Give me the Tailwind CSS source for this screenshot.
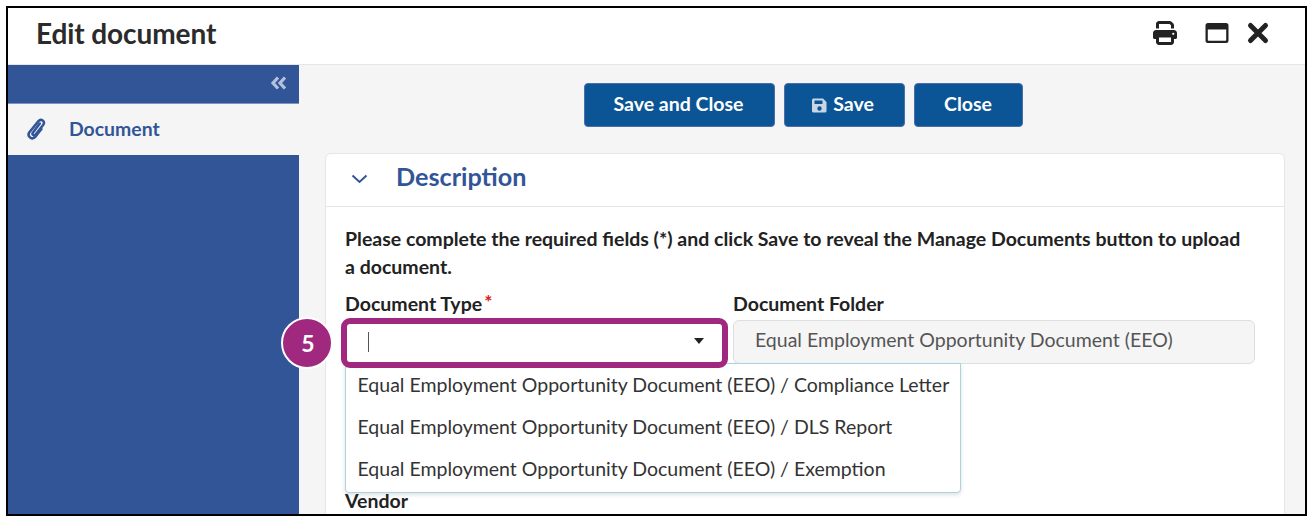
<!DOCTYPE html>
<html>
<head>
<meta charset="utf-8">
<script src="https://cdn.jsdelivr.net/npm/@tailwindcss/browser@4"></script>
</head>
<body class="bg-white">
<div class="w-[1313px] h-[522px] pt-[6px] pl-[6px] pr-[6px] pb-[6px] bg-white font-['Lato',sans-serif]">
  <div class="w-[1301px] h-[510px] border-2 border-black flex flex-col overflow-hidden bg-white">
    <header class="h-[57px] shrink-0 flex items-center justify-between border-b border-[#e6e6e6] pl-[28px] pr-[35px]">
      <h1 class="text-[28px] leading-[34px] font-bold text-[#2b2b2b] tracking-[-0.1px] -mt-[6px]">Edit document</h1>
      <div class="flex items-center gap-[17px] -mt-[7px]">
        <svg class="w-[24px] h-[24px] mr-[10px]" viewBox="0 0 512 512" fill="#222"><path d="M128 0C92.700 0 64 28.700 64 64v96h64V64h226.700L384 93.300V160h64V93.300c0-17-6.700-33.300-18.700-45.300L400 18.700C388 6.700 371.700 0 354.700 0H128zM384 352v96H128v-96h256zm64 32h32c17.700 0 32-14.300 32-32V256c0-35.300-28.700-64-64-64H64c-35.300 0-64 28.700-64 64v96c0 17.700 14.300 32 32 32h32v64c0 35.300 28.700 64 64 64h256c35.300 0 64-28.700 64-64v-64zm-16-136a24 24 0 1 1 0 48 24 24 0 1 1 0-48z"/></svg>
        <svg class="w-[24px] h-[24px] ml-[1px]" viewBox="0 0 24 24" fill="#222"><path fill-rule="evenodd" d="M3 2h18a2.500 2.500 0 0 1 2.500 2.500v15A2.500 2.500 0 0 1 21 22H3a2.500 2.500 0 0 1-2.500-2.500v-15A2.500 2.500 0 0 1 3 2zm-.2 6.500V19c0 .4.300.7.700.7h17c.4 0 .7-.3.700-.7V8.500H2.800z"/></svg>
        <svg class="w-[24px] h-[24px]" viewBox="0 0 24 24" fill="none" stroke="#222" stroke-width="5" stroke-linecap="round"><path d="M4.500 4.500l15 15M19.500 4.500l-15 15"/></svg>
      </div>
    </header>
    <div class="flex flex-1 min-h-0">
      <aside class="w-[291px] shrink-0 bg-[#325597] flex flex-col">
        <div class="h-[39px] border-b border-[#7d94c0] flex items-center justify-end pr-[12px] pb-[2px]">
          <svg class="w-[17px] h-[14px]" viewBox="0 0 17 14" fill="none" stroke="#b4c1dc" stroke-width="3.200" stroke-linejoin="miter"><path d="M8 1.500L3 7l5 5.500M15 1.500L10 7l5 5.500"/></svg>
        </div>
        <div class="h-[51px] bg-[#f5f5f5] flex items-center pl-[18px]">
          <svg class="w-[21px] h-[23px] -mt-[3px]" viewBox="0 0 19 21" fill="none" stroke="#325597" stroke-width="2.300" stroke-linecap="round"><path d="M12.500 6L6 14.500c-1 1.500 1.500 3 2.700 1.500l7-9c2-2.800-2-6-4.400-3.300L3 14c-2.500 3.500 2.500 7.500 5.500 4l5.500-7"/></svg>
          <span class="ml-[22px] -mt-[2px] text-[19.400px] leading-[24px] font-bold text-[#325597]">Document</span>
        </div>
      </aside>
      <main class="flex-1 bg-[#f5f5f5] relative">
        <div class="flex justify-center gap-[9px] pt-[18px] pl-[3px]">
          <button class="w-[191px] h-[44px] rounded-[4px] bg-[#0b5596] border border-[#4b6ea8] text-white font-bold text-[19.500px] pb-[2px] pr-[2px]">Save and Close</button>
          <button class="w-[121px] h-[44px] rounded-[4px] bg-[#0b5596] border border-[#4b6ea8] text-white font-bold text-[19.500px] pb-[2px] pr-[3px] flex items-center justify-center gap-[6px]">
            <svg class="w-[15px] h-[15px] mt-[2px]" viewBox="0 0 15 15" fill="#c8d6e6"><path fill-rule="evenodd" d="M1.500 0.500h9.500l3.500 3.500v9a1.500 1.500 0 0 1-1.500 1.500h-11.500A1.500 1.500 0 0 1 0 13V2a1.500 1.500 0 0 1 1.500-1.500zm1 2v3.500h8V2.500h-8zM7.500 8.300a2.200 2.200 0 1 0 0 4.400 2.200 2.200 0 0 0 0-4.400z"/></svg>
            Save
          </button>
          <button class="w-[109px] h-[44px] rounded-[4px] bg-[#0b5596] border border-[#4b6ea8] text-white font-bold text-[19.500px] pb-[2px] pr-[1px]">Close</button>
        </div>
        <section class="ml-[26px] mt-[26px] w-[960px] h-[400px] bg-white border border-[#e6e6e6] rounded-t-[6px]">
          <div class="h-[53px] border-b border-[#e6e6e6] flex items-center pl-[25px]">
            <svg class="w-[17px] h-[10px] -mt-[2px]" viewBox="0 0 17 10" fill="none" stroke="#325597" stroke-width="2"><path d="M1.500 1.500L8.500 8l7-6.500"/></svg>
            <h2 class="ml-[28px] -mt-[8px] text-[25.200px] leading-[32px] font-bold text-[#325597]">Description</h2>
          </div>
          <div class="pl-[19px] pr-[26px] pt-[18px]">
            <p class="pr-[14px] text-[19.500px] leading-[28px] font-bold text-[#222]">Please complete the required fields (*) and click Save to reveal the Manage Documents button to upload a document.</p>
            <div class="flex gap-[9px] mt-[11px]">
              <div class="w-[379px] shrink-0 relative">
                <label class="block text-[19.500px] leading-[24px] font-bold text-[#222]">Document Type<span class="text-[#e02020] font-bold ml-[2px] relative -top-[2px]">*</span></label>
                <div class="relative mt-[4px] h-[44px]">
                  <div class="absolute -inset-x-[4px] -top-[2px] -bottom-[4px] z-20 border-[6px] border-[#a0287f] rounded-[9px] bg-white flex items-center">
                    <span class="ml-[21px] -mt-[3px] w-[1px] h-[20px] bg-[#555]"></span>
                    <svg class="absolute right-[18px] top-[14px] w-[10px] h-[6px]" viewBox="0 0 10 6" fill="#222"><path d="M0 0h10L5 6z"/></svg>
                  </div>
                  <div class="absolute -left-[64px] -top-[3px] w-[52px] h-[52px] rounded-full bg-[#a0287f] border-2 border-white flex items-center justify-center text-white font-bold text-[23px] pl-[2px]">5</div>
                </div>
                <ul class="absolute left-0 top-[71px] w-[616px] h-[130px] bg-white border border-[#a9d2e3] rounded-b-[4px] shadow-[0_2px_4px_rgba(0,0,0,0.12)] text-[19.500px] leading-[42px] text-[#333] z-10">
                  <li class="pl-[11.500px] whitespace-nowrap">Equal Employment Opportunity Document (EEO) / Compliance Letter</li>
                  <li class="pl-[11.500px] whitespace-nowrap">Equal Employment Opportunity Document (EEO) / DLS Report</li>
                  <li class="pl-[11.500px] whitespace-nowrap">Equal Employment Opportunity Document (EEO) / Exemption</li>
                </ul>
              </div>
              <div class="w-[522px] shrink-0">
                <label class="block text-[19.500px] leading-[24px] font-bold text-[#222]">Document Folder</label>
                <div class="mt-[4px] h-[44px] rounded-[6px] bg-[#f5f5f5] border border-[#dedede] flex items-center pl-[21px] pb-[5px] text-[19.500px] text-[#555]">Equal Employment Opportunity Document (EEO)</div>
              </div>
            </div>
            <label class="block mt-[125px] text-[19.500px] leading-[24px] font-bold text-[#222]">Vendor</label>
          </div>
        </section>
      </main>
    </div>
  </div>
</div>
</body>
</html>
